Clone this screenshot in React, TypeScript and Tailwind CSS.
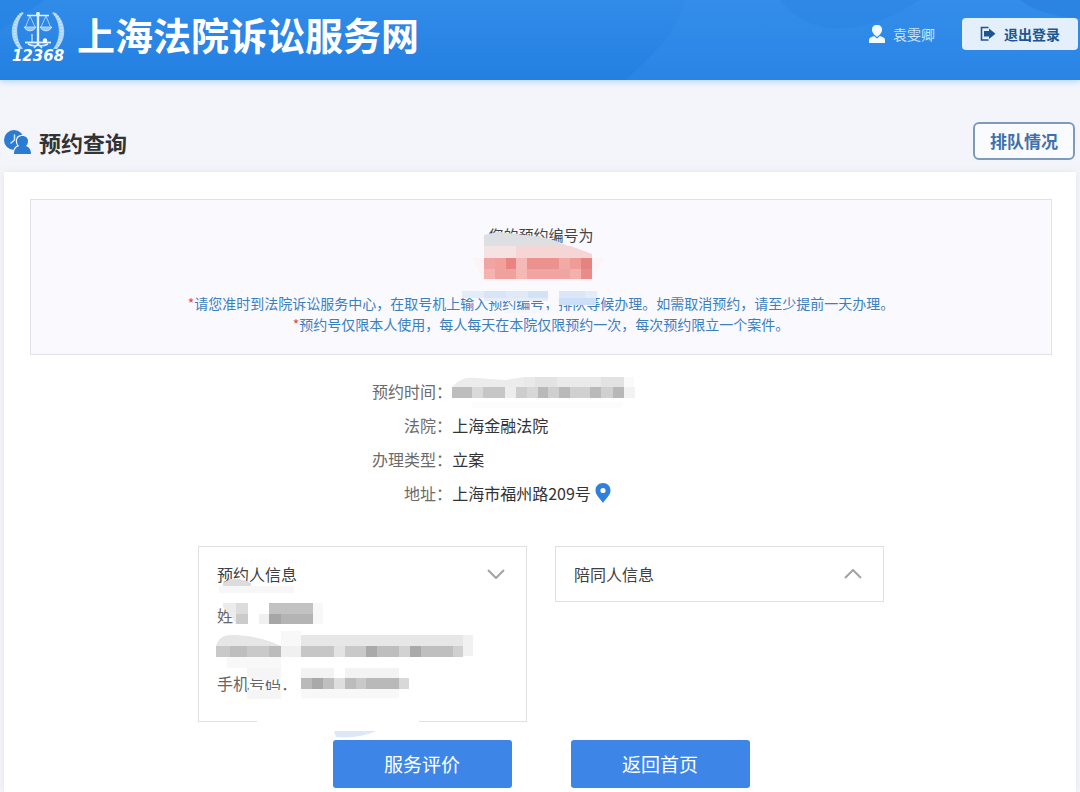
import { useState, type ReactNode } from "react";

type Block = [x: number, y: number, w: number, h: number, fill: string];

/* Pixelated cover drawn over private data */
function Mosaic({ blocks, children }: { blocks: Block[]; children?: ReactNode }) {
  return (
    <svg aria-hidden="true" className="pointer-events-none absolute top-0 left-0 h-full w-full overflow-visible">
      {children}
      {blocks.map(([x, y, w, h, fill], i) => (
        <rect key={i} x={x} y={y} width={w} height={h} fill={fill} />
      ))}
    </svg>
  );
}

const numberBlocks: Block[] = [
  [0, 26, 11, 11, "#f0a5a2"],
  [11, 26, 11, 11, "#f3a09d"],
  [22, 26, 10, 11, "#e88583"],
  [32, 26, 11, 11, "#f5bab7"],
  [43, 26, 32, 11, "#eb918e"],
  [75, 26, 11, 11, "#f2aaa7"],
  [86, 26, 11, 11, "#ee9c98"],
  [97, 26, 11, 11, "#e58380"],
  [0, 37, 11, 10, "#f3b4b1"],
  [11, 37, 21, 10, "#f0a19e"],
  [32, 37, 11, 10, "#f5b8b5"],
  [43, 37, 43, 10, "#f1a4a1"],
  [86, 37, 11, 10, "#f4b0ad"],
  [97, 37, 11, 10, "#e98b88"],
  [-22, 59, 22, 7, "#e3ecf9"],
  [0, 59, 22, 7, "#d8e5f8"],
  [22, 59, 22, 7, "#dfe9f8"],
  [44, 59, 20, 7, "#d3e2f7"],
  [0, 66, 64, 3, "#e4edf9"],
  [20, 78, 44, 3, "#f4f6fc"],
  [75, 59, 26, 7, "#dbe7f8"],
  [101, 59, 12, 7, "#e4ecf9"],
  [75, 66, 37, 7, "#cddff6"],
];

const timeBlocks: Block[] = [
  [83, 3, 11, 10, "#e9e9e9"],
  [94, 3, 22, 10, "#e3e3e3"],
  [116, 3, 44, 10, "#eaeaea"],
  [160, 3, 23, 10, "#e2e2e2"],
  [183, 3, 10, 10, "#fafafa"],
  [11, 13, 20, 11, "#bdbdbd"],
  [31, 13, 11, 11, "#d9d9d9"],
  [42, 13, 22, 11, "#c6c6c6"],
  [64, 13, 11, 11, "#ededed"],
  [75, 13, 11, 11, "#cdcdcd"],
  [86, 13, 11, 11, "#d7d7d7"],
  [97, 13, 10, 11, "#b9b9b9"],
  [107, 13, 11, 11, "#cfcfcf"],
  [118, 13, 11, 11, "#b9b9b9"],
  [129, 13, 20, 11, "#d0d0d0"],
  [149, 13, 11, 11, "#bababa"],
  [160, 13, 12, 11, "#d0d0d0"],
  [172, 13, 11, 11, "#b8b8b8"],
  [183, 13, 11, 11, "#f2f2f2"],
  [31, 28, 150, 6, "#fcfcfc"],
];

const personBlocks: Block[] = [
  [20, 39, 75, 7, "#f7f7f7"],
  [37, 56, 12, 11, "#dcdcdc"],
  [37, 67, 12, 10, "#cbcbcb"],
  [60, 67, 10, 10, "#f0f0f0"],
  [70, 56, 44, 11, "#c2c2c2"],
  [70, 67, 12, 10, "#a6a6a6"],
  [82, 67, 32, 10, "#b4b4b4"],
  [114, 56, 10, 21, "#f8f8f8"],
  [82, 84, 20, 20, "#f8f8f8"],
  [102, 88, 162, 11, "#e7e7e7"],
  [264, 88, 10, 21, "#f1f1f1"],
  [17, 99, 14, 11, "#c9c9c9"],
  [31, 99, 17, 11, "#bebebe"],
  [48, 99, 22, 11, "#c9c9c9"],
  [70, 99, 12, 11, "#bcbcbc"],
  [82, 99, 20, 11, "#f0f0f0"],
  [102, 99, 33, 11, "#c6c6c6"],
  [135, 99, 11, 11, "#e3e3e3"],
  [146, 99, 21, 11, "#c9c9c9"],
  [167, 99, 11, 11, "#aaaaaa"],
  [178, 99, 22, 11, "#bebebe"],
  [200, 99, 11, 11, "#d2d2d2"],
  [211, 99, 11, 11, "#a9a9a9"],
  [222, 99, 32, 11, "#bfbfbf"],
  [254, 99, 10, 11, "#d0d0d0"],
  [28, 110, 54, 11, "#f8f8f8"],
  [102, 121, 33, 10, "#f3f3f3"],
  [146, 121, 54, 10, "#f3f3f3"],
  [48, 143, 34, 9, "#f5f5f5"],
  [84, 132, 12, 6, "#ffffff"],
  [102, 131, 11, 11, "#bababa"],
  [113, 131, 11, 11, "#a9a9a9"],
  [124, 131, 11, 11, "#bfbfbf"],
  [135, 131, 11, 11, "#dedede"],
  [146, 131, 11, 11, "#bcbcbc"],
  [157, 131, 10, 11, "#c9c9c9"],
  [167, 131, 33, 11, "#b9b9b9"],
  [200, 131, 10, 11, "#d8d8d8"],
  [102, 142, 98, 9, "#f8f8f8"],
];

function CourtLogo() {
  return (
    <div className="flex w-[54px] flex-col items-center text-white">
      <svg aria-hidden="true" viewBox="0 0 54 39" className="h-[39px] w-[54px]" fill="none" stroke="#e2f1ff">
        <path d="M11 1C-1 9 -3 27 8 38H12C4 28 4 11 13 2Z" fill="#a9d3fa" stroke="none" />
        <path d="M43 1C55 9 57 27 46 38H42C50 28 50 11 41 2Z" fill="#a9d3fa" stroke="none" />
        <path d="M10 3C2 11 1 27 9 37M44 3C52 11 53 27 45 37" strokeWidth="3" strokeDasharray="1 2" opacity=".7" />
        <path d="M27 1V33" strokeWidth="2.400" />
        <path d="M16 4.500H38" strokeWidth="1.500" />
        <circle cx="27" cy="3" r="2" fill="#e2f1ff" stroke="none" />
        <path d="M19 5L14.500 16M19 5L24 16M35 5L30 16M35 5L39.500 16" strokeWidth=".8" opacity=".85" />
        <path d="M13 16H25Q23 20 19 20Q15 20 13 16ZM29 16H41Q39 20 35 20Q31 20 29 16Z" fill="#8fc5f8" strokeWidth=".7" />
        <path d="M21 23V31" strokeWidth="1.500" opacity=".8" />
        <path d="M14 31.500H40" strokeWidth="1.800" />
        <path d="M17 33Q23 36 27 34Q31 36 37 33M23 37L27 33L31 37" strokeWidth="1.500" />
        <circle cx="34" cy="29.500" r="2.200" fill="#fff" stroke="none" />
      </svg>
      <span className="font-['DejaVu_Sans',sans-serif] text-[15px] leading-3 font-bold italic">12368</span>
    </div>
  );
}

function UserIcon() {
  return (
    <svg aria-hidden="true" viewBox="0 0 16 18" className="h-[18px] w-4" fill="#f3faff">
      <path d="M8 0C11.500 0 13.200 2 13 5C12.800 7.500 11.500 9 10 10.300L8 12L6 10.300C4.500 9 3.200 7.500 3 5C2.800 2 4.500 0 8 0Z" />
      <path d="M5 11L8 13.500L11 11L14.500 12.500Q16 13.300 16 15V18H0V15Q0 13.300 1.500 12.500Z" />
    </svg>
  );
}

function LogoutIcon() {
  return (
    <svg aria-hidden="true" viewBox="0 0 16 16" className="h-4 w-4" fill="#1c5590">
      <path d="M8.500 1.500H1.500V14H8.500" fill="none" stroke="#1c5590" strokeWidth="1.600" />
      <path d="M4 5H9V2.500L15.500 7.800L9 13V10.600H4Z" />
    </svg>
  );
}

function BookingIcon() {
  return (
    <svg aria-hidden="true" viewBox="0 0 27 24" className="h-6 w-[27px]">
      <circle cx="10" cy="10" r="10" fill="#2b7bd3" />
      <path d="M10.500 5V10L7 13" fill="none" stroke="#d5e7fa" strokeWidth="1.500" strokeLinecap="round" />
      <g fill="#2b7bd3" stroke="#f4f5fa" strokeWidth="2.500" strokeLinejoin="round" paintOrder="stroke">
        <path d="M18.500 6C22 6 24 8.200 24 11.200C24 13.500 23 15 21.800 16C25 17 27 19.500 27 24H10C10 19.500 12 17 15.200 16C14 15 13 13.500 13 11.200C13 8.200 15 6 18.500 6Z" />
      </g>
    </svg>
  );
}

function PinIcon() {
  return (
    <svg aria-hidden="true" viewBox="0 0 16 20" className="h-5 w-4">
      <path d="M8 0C3.500 0 .5 3.200 .5 7.500C.5 12 5 15.500 8 20C11 15.500 15.500 12 15.500 7.500C15.500 3.200 12.500 0 8 0Z" fill="#2f80dc" />
      <circle cx="8" cy="7.500" r="2.600" fill="#fff" />
    </svg>
  );
}

function InfoCard({ title, initiallyOpen, children }: { title: string; initiallyOpen: boolean; children?: ReactNode }) {
  const [open, setOpen] = useState(initiallyOpen);
  return (
    <section className="relative border border-[#e0e0e0] bg-white">
      <h2>
        <button
          type="button"
          aria-expanded={open}
          onClick={() => setOpen(!open)}
          className="flex w-full items-center justify-between pt-4 pr-[21px] pl-[18px] text-[16px] leading-[22px] text-[#404040]"
        >
          {title}
          <svg aria-hidden="true" viewBox="0 0 18 10" className="h-[10px] w-[18px]" fill="none" stroke="#a2a2a2" strokeWidth="2">
            <path d={open ? "M1 1L9 9L17 1" : "M1 9L9 1L17 9"} />
          </svg>
        </button>
      </h2>
      {open && children ? children : <div className="h-4" />}
    </section>
  );
}

function DetailRow({ label, children }: { label: string; children?: ReactNode }) {
  return (
    <div className="grid grid-cols-[19fr_27fr]">
      <dt className="text-right text-[#6b6b6b]">{label}：</dt>
      <dd className="relative flex h-[34px] items-center gap-1 text-[#333]">{children}</dd>
    </div>
  );
}

export default function App() {
  return (
    <div className="flex min-h-screen flex-col bg-[#f4f5fa] font-['Noto_Sans_CJK_SC',sans-serif]">
      <header className="relative z-10 flex h-20 items-center justify-between bg-linear-to-b from-[#318be9] to-[#2380e1] shadow-[0_1px_7px_#a8cbf5]">
        <svg aria-hidden="true" viewBox="0 0 1080 80" preserveAspectRatio="none" className="absolute inset-0 h-full w-full">
          <path d="M0 0H45L0 30Z" fill="#2481e2" opacity=".5" />
          <path d="M685 0Q678 35 625 80H1080V0Z" fill="#3b95ef" opacity=".25" />
          <path d="M780 0Q820 50 900 12L920 0Z" fill="#2078d5" opacity=".2" />
          <path d="M1020 0Q1040 16 1080 18V0Z" fill="#1d71cf" opacity=".3" />
        </svg>
        <div className="relative flex items-center gap-3 pb-2 pl-[11px]">
          <CourtLogo />
          <h1 className="pb-1 text-[38px] leading-[46px] font-bold text-white">上海法院诉讼服务网</h1>
        </div>
        <div className="relative flex items-center gap-[27px] pr-[2px] pb-3">
          <span className="flex items-center gap-2 text-[14px] leading-5 text-[#c9e6fc]">
            <UserIcon />
            袁雯卿
          </span>
          <button type="button" className="flex h-8 items-center gap-2 rounded bg-[#e3effb] px-[18px] text-[14px] font-bold text-[#1c5590]">
            <LogoutIcon />
            退出登录
          </button>
        </div>
      </header>

      <div className="flex h-[92px] items-end justify-between pr-[5px] pl-1">
        <h2 className="flex items-center gap-2 pb-[14px] text-[22px] leading-8 font-bold text-[#333]">
          <BookingIcon />
          预约查询
        </h2>
        <button type="button" className="mb-3 h-[38px] rounded-md border-2 border-[#7f9bba] bg-[#f9fbfe] px-[15px] text-[17px] font-bold text-[#3f70aa]">
          排队情况
        </button>
      </div>

      <main className="mx-1 flex-1 bg-white pt-[27px] pr-6 pb-1 pl-[26px] shadow-[0_0_8px_#e2e5e9]">
        <section className="border border-[#e1e2e8] bg-[#f9f9fe] pt-6 pb-[19px] text-center">
          <p className="text-[15px] leading-[22px] text-[#444]">您的预约编号为</p>
          <div className="relative mx-auto h-[47px] w-[114px]">
            <div className="absolute -top-[14px] left-0 h-full w-full">
              <Mosaic blocks={numberBlocks}>
                <path d="M-12 26H120L108 49H0Z" fill="#fcf4f7" />
                <path d="M0 3L14 0L50 4Q72 7 86 15V18H0Z" fill="#dedfe3" />
                <path d="M0 14H86L108 22V26H0Z" fill="#f5e2e3" />
                <path d="M32 14H86L108 22V26H32Z" fill="#f6d5d5" />
              </Mosaic>
            </div>
          </div>
          <p className="text-[14px] leading-[21px] text-[#3b80be]">
            <span className="text-[#e54848]">*</span>请您准时到法院诉讼服务中心，在取号机上输入预约编号，排队等候办理。如需取消预约，请至少提前一天办理。
          </p>
          <p className="text-[14px] leading-[21px] text-[#3b80be]">
            <span className="text-[#e54848]">*</span>预约号仅限本人使用，每人每天在本院仅限预约一次，每次预约限立一个案件。
          </p>
        </section>

        <dl className="mt-[19px] text-[16px] leading-[34px]">
          <DetailRow label="预约时间">
            <div className="absolute top-0 -left-[11px] h-full w-[200px]">
              <Mosaic blocks={timeBlocks}>
                <path d="M11 13Q20 2 35 4L64 6L83 3V13Z" fill="#ececec" />
              </Mosaic>
            </div>
          </DetailRow>
          <DetailRow label="法院">上海金融法院</DetailRow>
          <DetailRow label="办理类型">立案</DetailRow>
          <DetailRow label="地址">
            上海市福州路209号
            <PinIcon />
          </DetailRow>
        </dl>

        <div className="mx-auto mt-9 grid max-w-[686px] grid-cols-2 items-start gap-7">
          <InfoCard title="预约人信息" initiallyOpen>
            <div className="mt-[13px] px-[18px] pb-[21px] text-[16px] leading-[34px] text-[#666]">
              <p>姓</p>
              <p className="h-[34px]" />
              <p>手机号码：</p>
            </div>
            <Mosaic blocks={personBlocks}>
              <path d="M24 36Q36 28 52 36V39H24Z" fill="#dcdcdc" />
              <path d="M24 56H37V77Q33 70 24 60Z" fill="#ececec" />
              <path d="M17 99Q20 87 35 88Q62 89 82 99Z" fill="#e6e6e6" />
              <path d="M48 121H82V132Q62 135 48 130Z" fill="#f5f5f5" />
              <path d="M58 173H220V177H58Z" fill="#fff" />
              <path d="M135 184H177Q160 192 137 190Z" fill="#dce7f8" />
            </Mosaic>
          </InfoCard>
          <InfoCard title="陪同人信息" initiallyOpen={false} />
        </div>

        <div className="mt-[18px] flex justify-center gap-[59px] text-[19px] text-white">
          <button type="button" className="h-12 w-[179px] rounded-[3px] bg-[#3d86e8]">
            服务评价
          </button>
          <button type="button" className="h-12 w-[179px] rounded-[3px] bg-[#3d86e8]">
            返回首页
          </button>
        </div>
      </main>
    </div>
  );
}
